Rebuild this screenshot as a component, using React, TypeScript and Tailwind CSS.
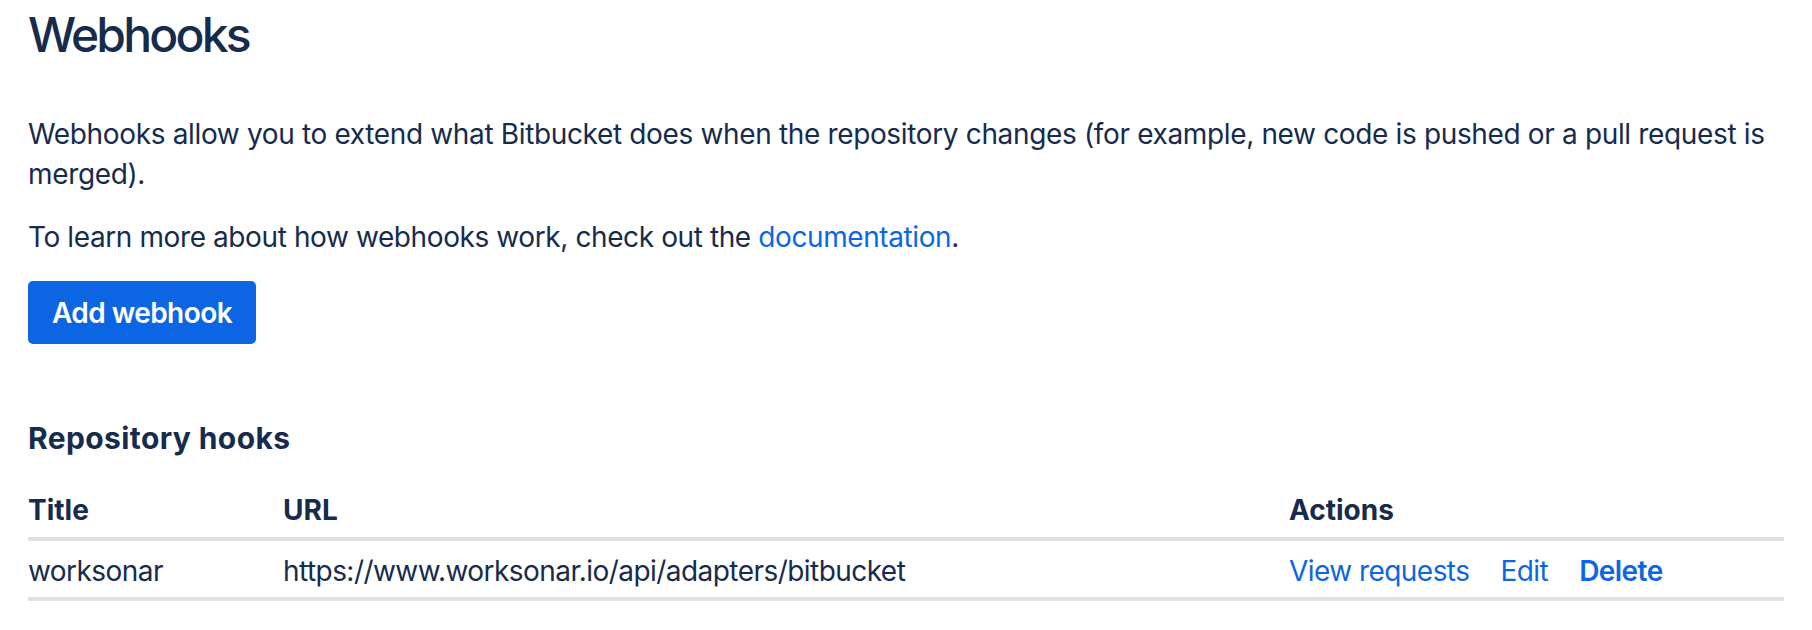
const hooks = [
  {
    id: 1,
    title: "worksonar",
    url: "https://www.worksonar.io/api/adapters/bitbucket",
  },
];

const App = () => {
  return (
    <div className="min-h-[630px] bg-white px-[28px] pt-[6px] font-['Inter',sans-serif] text-[#172b4d]">
      <h1 className="text-[48px] font-medium leading-[58px] tracking-[-2.8px]">
        Webhooks
      </h1>

      <p className="mt-[50px] text-[28px] leading-[40px] tracking-[-0.35px]">
        Webhooks allow you to extend what Bitbucket does when the repository
        changes (for example, new code is pushed or a pull request is merged).
      </p>

      <p className="mt-[23px] text-[28px] leading-[40px] tracking-[-0.4px]">
        To learn more about how webhooks work, check out the{" "}
        <a className="text-[#0c66e4]" href="#">
          documentation
        </a>
        .
      </p>

      <button
        className="mt-[24px] h-[63px] w-[228px] rounded-[5px] bg-[#0c66e4] text-[28px] font-semibold tracking-[-0.55px] text-white"
        type="button"
      >
        Add webhook
      </button>

      <h2 className="mt-[74px] text-[30px] font-bold leading-[40px] tracking-[0.4px]">
        Repository hooks
      </h2>

      <table className="mt-[32px] w-full border-collapse text-left text-[28px] leading-[40px]">
        <thead>
          <tr className="border-b-4 border-[#dfe1e6]">
            <th className="w-[255px] pb-[7px] font-bold">Title</th>
            <th className="w-[1006px] pb-[7px] font-bold">URL</th>
            <th className="pb-[7px] font-bold">Actions</th>
          </tr>
        </thead>
        <tbody className="tracking-[-0.55px]">
          {hooks.map((hook) => (
            <tr key={hook.id} className="border-b-4 border-[#dfe1e6]">
              <td className="pt-[10px] pb-[6px]">{hook.title}</td>
              <td className="pt-[10px] pb-[6px]">{hook.url}</td>
              <td className="pt-[10px] pb-[6px]">
                <div className="flex gap-[31px] text-[#0c66e4]">
                  <a href="#">View requests</a>
                  <a href="#">Edit</a>
                  <a className="font-semibold" href="#">
                    Delete
                  </a>
                </div>
              </td>
            </tr>
          ))}
        </tbody>
      </table>
    </div>
  );
};

export default App;
